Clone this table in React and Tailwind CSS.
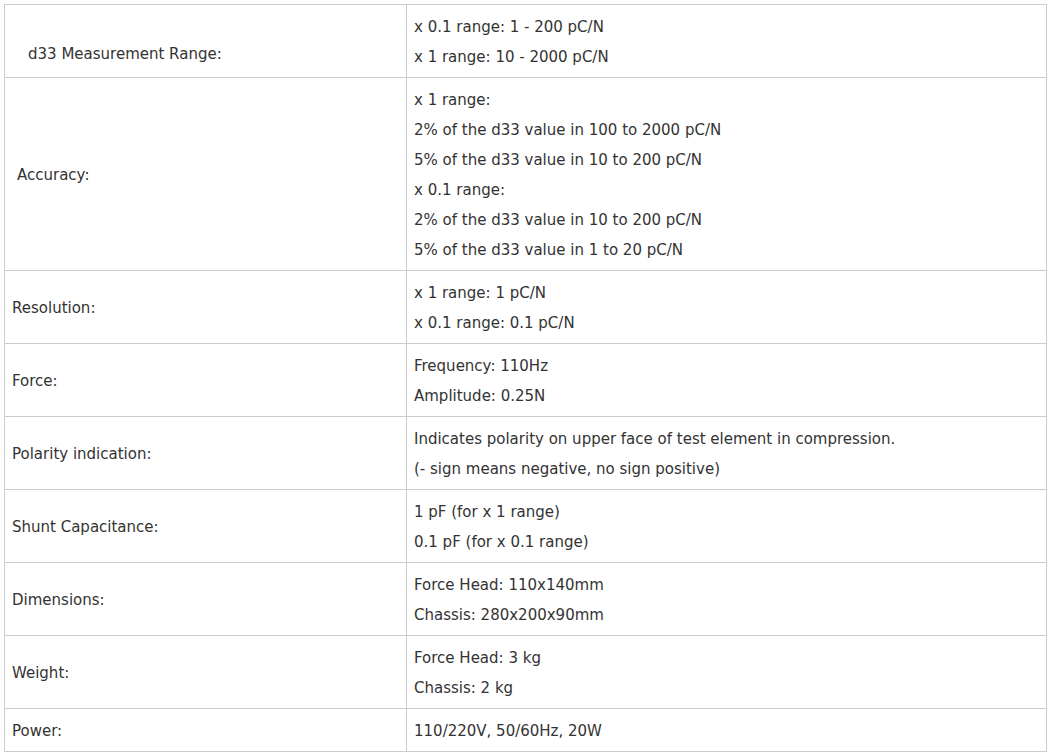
const rows = [
  {
    label: 'd33 Measurement Range:',
    labelClass: 'pl-[23px] pt-[31px]',
    lines: ['x 0.1 range: 1 - 200 pC/N', 'x 1 range: 10 - 2000 pC/N'],
  },
  {
    label: 'Accuracy:',
    labelClass: 'pl-[12px]',
    lines: [
      'x 1 range:',
      '2% of the d33 value in 100 to 2000 pC/N',
      '5% of the d33 value in 10 to 200 pC/N',
      'x 0.1 range:',
      '2% of the d33 value in 10 to 200 pC/N',
      '5% of the d33 value in 1 to 20 pC/N',
    ],
  },
  { label: 'Resolution:', lines: ['x 1 range: 1 pC/N', 'x 0.1 range: 0.1 pC/N'] },
  { label: 'Force:', lines: ['Frequency: 110Hz', 'Amplitude: 0.25N'] },
  {
    label: 'Polarity indication:',
    lines: [
      'Indicates polarity on upper face of test element in compression.',
      '(- sign means negative, no sign positive)',
    ],
  },
  { label: 'Shunt Capacitance:', lines: ['1 pF (for x 1 range)', '0.1 pF (for x 0.1 range)'] },
  { label: 'Dimensions:', lines: ['Force Head: 110x140mm', 'Chassis: 280x200x90mm'] },
  { label: 'Weight:', lines: ['Force Head: 3 kg', 'Chassis: 2 kg'] },
  { label: 'Power:', lines: ['110/220V, 50/60Hz, 20W'] },
]

export default function App() {
  return (
    <div className="bg-white min-h-[756px] pt-[4px] pl-[4px]" style={{ fontFamily: '"DejaVu Sans", Verdana, sans-serif' }}>
      <table className="w-[1043px] border-collapse text-[15px] text-[#333] leading-[30px]">
        <tbody>
          {rows.map(row => (
            <tr key={row.label}>
              <td className={`w-[402px] border border-[#ccc] pt-[7px] pb-[5px] pr-[7px] align-middle ${row.labelClass || 'pl-[7px]'}`}>
                {row.label}
              </td>
              <td className="border border-[#ccc] pt-[7px] pb-[5px] px-[7px] align-middle">
                {row.lines.map(line => (
                  <div key={line}>{line}</div>
                ))}
              </td>
            </tr>
          ))}
        </tbody>
      </table>
    </div>
  )
}
